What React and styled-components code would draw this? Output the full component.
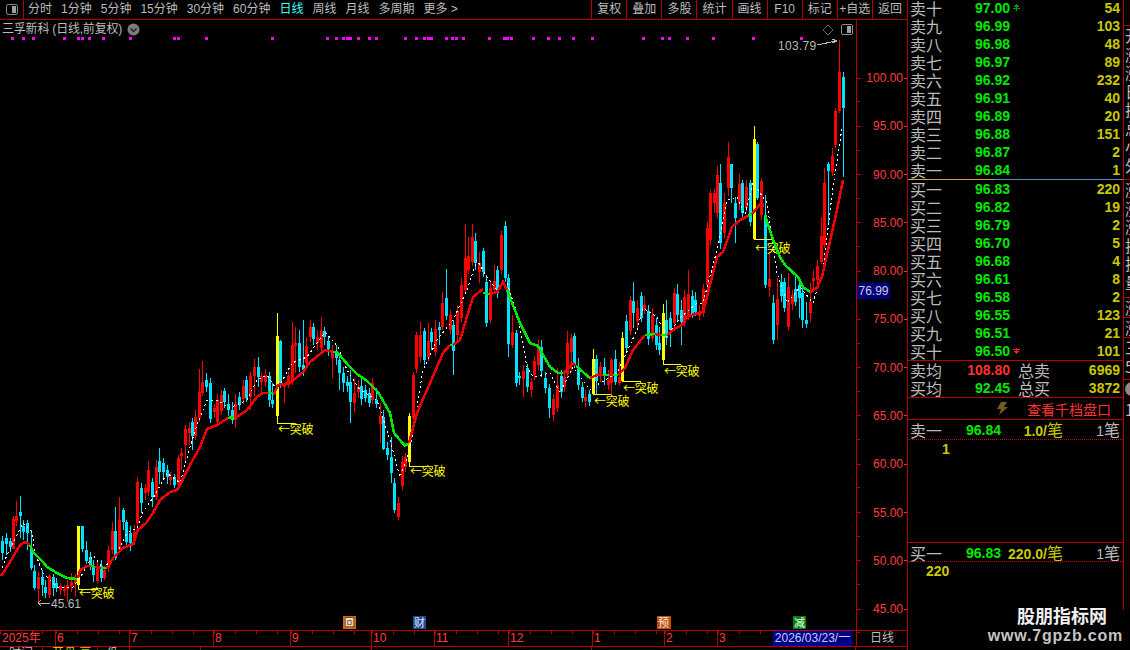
import React from "react";
import styled, { createGlobalStyle } from "styled-components";

const LINE = "#b40000";
const GREY = "#bcbcbc";
const NUM = `"Liberation Sans", "Noto Sans CJK SC", sans-serif`;
const CJK = `"Noto Sans CJK SC", "Liberation Sans", sans-serif`;

const GlobalStyle = createGlobalStyle`
  html, body { margin: 0; padding: 0; background: #000; }
  body { width: 1130px; height: 650px; overflow: hidden; font-family: ${CJK}; }
`;

const Page = styled.div`
  position: relative;
  width: 1130px;
  height: 650px;
  overflow: hidden;
  background: #000;
  display: flex;
`;

const MainCol = styled.div`
  width: 908px;
  flex: none;
  box-sizing: border-box;
  border-right: 1px solid ${LINE};
  display: flex;
  flex-direction: column;
`;

const Toolbar = styled.div`
  height: 20px;
  flex: none;
  box-sizing: border-box;
  border-bottom: 1px solid ${LINE};
  display: flex;
  align-items: stretch;
  font: 12px/19px ${NUM};
  color: ${GREY};
`;

const ToggleCell = styled.div`
  width: 24px;
  flex: none;
  box-sizing: border-box;
  border-right: 1px solid ${LINE};
  display: flex;
  align-items: center;
  justify-content: center;
`;

const PeriodTabs = styled.div`
  display: flex;
  gap: 9px;
  padding-left: 4px;
  flex: 1;
`;

const Tab = styled.span`
  color: ${(p) => (p.$active ? "#40ffff" : GREY)};
  white-space: pre;
`;

const ToolBtn = styled.div`
  width: 35.1px;
  flex: none;
  box-sizing: border-box;
  border-left: 1px solid ${LINE};
  text-align: center;
  white-space: nowrap;
`;

const ChartRow = styled.div`
  height: 610px;
  flex: none;
  display: flex;
`;

const ChartBox = styled.div`
  position: relative;
  width: 856px;
  height: 610px;
  flex: none;
`;

const ChartTitle = styled.div`
  position: absolute;
  left: 2px;
  top: 2px;
  display: flex;
  align-items: center;
  gap: 5px;
  font: 12px/15px ${NUM};
  letter-spacing: -0.2px;
  color: ${GREY};
`;

const ChartSvg = styled.svg`
  display: block;
  shape-rendering: crispEdges;
`;

const AxisCol = styled.div`
  position: relative;
  width: 51px;
  flex: none;
  box-sizing: border-box;
  border-left: 1px solid ${LINE};
  padding-top: 34px;
`;

const AxisRow = styled.div`
  height: 48.27px;
  display: flex;
  align-items: center;
  justify-content: space-between;
  font: 12px/14px ${NUM};
  color: #ff3c3c;
  background: linear-gradient(${LINE}, ${LINE}) left bottom / 3px 1px no-repeat;

  &::before {
    content: "";
    width: 4px;
    height: 1px;
    background: ${LINE};
  }
  &::after {
    content: "";
    width: 3px;
    height: 1px;
    background: #ff3030;
  }
`;

const AxisLabel = styled.span`
  margin-left: auto;
  margin-right: 1px;
`;

const PriceTag = styled.div`
  position: absolute;
  left: 0;
  top: 263px;
  width: 33px;
  height: 16px;
  background: #000080;
  color: #cfcfcf;
  font: 12px/16px ${NUM};
  text-align: center;
`;

const TimeRow = styled.div`
  height: 17px;
  flex: none;
  box-sizing: border-box;
  border-top: 1px solid ${LINE};
  border-bottom: 1px solid ${LINE};
  display: flex;
  font: 12px/15px ${NUM};
  color: #ff3c3c;
`;

const TimeCell = styled.div`
  width: ${(p) => p.$w}px;
  flex: none;
  box-sizing: border-box;
  padding-left: ${(p) => (p.$first ? 2 : 1)}px;
  border-left: ${(p) => (p.$first ? "none" : `1px solid ${LINE}`)};
  background: repeating-linear-gradient(90deg, ${LINE} 0 1px, transparent 1px 21px) left top / 100% 3px no-repeat;
`;

const DateBox = styled.div`
  width: 79px;
  flex: none;
  margin-left: 1px;
  margin-right: 4px;
  box-sizing: border-box;
  background: #000080;
  border: 1px solid #0000b0;
  color: #c8c8ff;
  font-size: 12px;
  line-height: 13px;
  text-align: center;
  white-space: nowrap;
`;

const CycleCell = styled.div`
  flex: 1;
  box-sizing: border-box;
  border-left: 1px solid ${LINE};
  color: ${GREY};
  text-align: center;
`;

const ClipRow = styled.div`
  flex: 1;
  overflow: hidden;
  display: flex;
  font: 12px/12px ${NUM};
  color: ${GREY};
`;

const ClipCell = styled.div`
  width: ${(p) => p.$w}px;
  flex: none;
  box-sizing: border-box;
  padding-left: 9px;
  border-right: 1px solid ${LINE};
  color: ${(p) => p.$color || GREY};
  white-space: nowrap;
  overflow: hidden;
`;

const SidePanel = styled.div`
  width: 216px;
  height: 100%;
  flex: none;
  box-sizing: border-box;
  border-right: 1px solid ${LINE};
  display: flex;
  flex-direction: column;
`;

const BookRows = styled.div`
  height: ${(p) => p.$h}px;
  margin-top: ${(p) => p.$mt || 0}px;
  flex: none;
`;

const BookRow = styled.div`
  height: 18px;
  padding: 0 3px 0 2px;
  display: grid;
  grid-template-columns: 38px 62px 12px 1fr;
  align-items: center;
`;

const Label = styled.span`
  font: 16px/18px ${CJK};
  color: ${GREY};
  white-space: nowrap;
`;

const Num = styled.span`
  font: bold 14px/18px "Liberation Sans", sans-serif;
  color: ${(p) => p.$color || "#00e800"};
  text-align: ${(p) => p.$align || "right"};
`;

const Marker = styled.svg`
  margin-left: 3px;
  display: block;
`;

const MidLine = styled.div`
  height: 1px;
  flex: none;
  background: linear-gradient(90deg, #e0a040 0 86px, #4f8fc4 86px);
`;

const SummaryBox = styled.div`
  flex: none;
  border-top: 1px solid ${LINE};
  border-bottom: 1px solid ${LINE};
`;

const SummaryRow = styled.div`
  height: 18px;
  padding: 0 3px 0 2px;
  display: grid;
  grid-template-columns: 38px 62px 1fr auto;
  align-items: center;
`;

const SumLabel = styled(Label)`
  padding-left: 8px;
`;

const DepthLink = styled.div`
  height: 22px;
  flex: none;
  box-sizing: border-box;
  border-bottom: 1px solid ${LINE};
  display: flex;
  align-items: center;
  padding-left: 88px;
  gap: 19px;
  font: 14px/20px ${CJK};
  color: #ff3030;
`;

const TradeBox = styled.div`
  height: ${(p) => p.$h}px;
  flex: none;
  box-sizing: border-box;
  border-bottom: ${(p) => (p.$end ? "none" : `1px solid ${LINE}`)};
`;

const TradeHead = styled.div`
  height: ${(p) => p.$h}px;
  box-sizing: border-box;
  padding: 0 3px 0 2px;
  border-bottom: 1px dotted #d00000;
  display: grid;
  grid-template-columns: 38px 53px 62px 1fr;
  align-items: center;
`;

const TradeVol = styled.span`
  text-align: right;
  color: #c8c800;
  font: bold 14px/18px "Liberation Sans", sans-serif;
  white-space: nowrap;
`;

const Hand = styled.span`
  font: 16px/18px ${CJK};
  color: ${(p) => p.$color || "inherit"};
  font-weight: 400;
`;

const TradeCount = styled.span`
  text-align: right;
  color: ${GREY};
  font: 14px/18px "Liberation Sans", sans-serif;
`;

const TradeList = styled.div`
  padding-left: ${(p) => p.$pad}px;
  height: 18px;
  display: flex;
  align-items: center;
`;

const Strip = styled.div`
  flex: 1;
  overflow: hidden;
  display: flex;
  flex-direction: column;
  padding-top: 25px;
`;

const StripGroup = styled.div`
  height: ${(p) => p.$h}px;
  flex: none;
  box-sizing: border-box;
  border-top: 1px solid ${LINE};
  padding-left: 1px;
  overflow: hidden;
  font: 16px/18.5px ${CJK};
  color: ${GREY};
  white-space: nowrap;
`;

const StripDot = styled.div`
  width: 14px;
  height: 14px;
  margin: 2px 0 4px;
  border-radius: 50%;
  background: #8a8a8a;
`;

const Watermark = styled.div`
  position: absolute;
  right: 0;
  bottom: 0;
  width: 145px;
  height: 40px;
  background: #000;
  display: flex;
  flex-direction: column;
  align-items: flex-end;
  padding-right: 7px;
  box-sizing: border-box;
`;

const MarkName = styled.div`
  font: bold 18px/22px ${CJK};
  color: #f0f0f0;
  margin: -6px 16px 0 0;
`;

const MarkUrl = styled.div`
  font: bold 16px/19px "Liberation Sans", sans-serif;
  letter-spacing: 0.8px;
  color: #c4c4c4;
`;

// [x, bodyTop, bodyBottom, wickTop, wickBottom, red]
const CANDLES = [
  [2,541,553,536,560,0],[6,538,544,533,555,0],[10,541,547,538,552,0],[13,519,549,516,549,1],[16,516,521,501,526,1],
  [20,512,516,496,538,0],[23,526,532,520,540,0],[27,523,533,520,550,0],[31,548,568,530,570,0],[34,571,588,565,590,0],
  [38,577,589,572,603,1],[42,577,585,570,596,0],[45,587,593,580,598,0],[49,576,595,574,598,1],[53,577,588,574,596,0],
  [56,583,588,578,592,0],[60,586,590,583,595,1],[64,589,591,585,596,1],[67,585,589,580,602,1],[71,582,586,573,592,1],
  [75,578,583,574,597,1],[82,526,549,526,552,0],[86,550,561,541,564,0],[90,557,566,552,570,0],[93,566,575,560,582,0],
  [97,567,581,560,583,1],[101,566,578,560,582,0],[104,570,578,566,580,1],[108,550,568,546,572,1],[112,531,550,522,554,1],
  [115,531,558,507,560,0],[119,520,550,497,552,1],[123,510,522,508,530,0],[126,522,542,520,548,0],[130,533,543,526,551,0],
  [134,532,540,525,545,1],[137,482,523,477,533,1],[141,488,503,483,513,0],[145,488,493,484,500,1],[148,470,492,461,496,1],
  [152,482,497,478,507,0],[156,467,497,460,500,1],[159,461,472,448,484,0],[163,463,472,458,480,0],[167,470,477,465,484,0],
  [170,477,480,472,485,1],[174,477,485,474,488,0],[178,458,484,455,486,1],[181,453,456,448,470,1],[185,429,445,425,462,1],
  [189,428,433,423,445,1],[192,422,436,418,450,0],[195,417,436,410,440,1],[199,392,418,369,422,1],[202,382,393,361,396,1],
  [206,380,387,373,392,0],[210,383,419,378,423,0],[214,408,412,404,418,1],[217,400,422,394,426,1],[221,395,411,390,415,1],
  [224,391,402,388,408,0],[228,404,410,394,416,0],[232,410,420,402,424,0],[235,404,420,394,428,1],[239,397,405,392,410,0],
  [243,386,399,380,404,1],[246,380,398,376,402,0],[250,376,397,372,410,1],[254,367,376,359,396,1],[258,367,377,357,387,0],
  [261,376,382,372,395,1],[265,375,382,369,387,1],[269,376,400,372,407,0],[272,400,404,383,408,0],[280,341,385,340,388,0],
  [284,383,387,383,403,1],[288,376,385,372,388,1],[292,345,382,322,385,1],[295,343,346,327,373,1],[299,343,367,330,372,0],
  [303,365,370,320,376,0],[306,346,363,337,365,1],[310,327,337,320,342,1],[313,327,339,323,345,0],[317,337,343,330,350,1],
  [321,331,348,317,352,1],[324,331,337,327,345,0],[328,341,349,337,356,0],[332,351,358,345,378,1],[336,351,358,345,365,0],
  [339,360,373,356,390,0],[343,373,383,367,392,0],[347,382,386,376,392,0],[350,382,402,370,423,0],[354,393,403,378,412,1],
  [358,387,392,380,398,1],[361,386,399,378,405,0],[365,390,398,385,402,0],[369,393,403,388,407,0],[372,383,400,378,404,1],
  [376,400,404,388,408,0],[380,416,424,403,443,1],[383,417,449,410,450,0],[387,448,455,442,460,0],[391,457,473,437,483,0],
  [394,483,510,478,513,0],[398,503,517,497,520,1],[402,462,486,456,490,1],[405,457,467,453,472,1],[413,375,418,372,420,1],
  [416,335,369,332,373,1],[420,335,357,322,362,1],[424,331,360,328,365,0],[428,341,357,323,361,1],[431,332,342,328,350,0],
  [435,329,352,320,356,1],[439,327,330,322,345,0],[442,303,327,292,330,1],[446,298,316,269,320,0],[450,315,330,310,335,1],
  [453,325,351,320,375,0],[457,311,335,305,340,1],[461,285,318,278,322,1],[465,258,290,224,294,1],[468,256,270,237,274,1],
  [472,237,262,224,266,1],[475,241,263,233,270,0],[479,263,272,252,283,1],[483,251,272,248,277,0],[486,282,323,275,327,0],
  [490,288,320,280,323,1],[494,281,290,265,293,1],[497,270,293,266,298,0],[501,235,270,231,274,1],[505,226,278,221,282,0],
  [508,278,344,274,357,0],[512,332,345,315,348,1],[516,333,383,330,387,0],[519,376,378,372,385,0],[523,371,379,365,397,1],
  [527,368,387,364,392,0],[531,382,390,378,397,1],[534,361,375,356,380,1],[538,348,365,339,370,1],[541,347,371,340,377,0],
  [545,378,388,372,393,0],[549,388,408,384,418,0],[553,399,415,394,421,1],[557,385,408,368,412,1],[561,376,392,370,398,0],
  [564,377,387,372,392,1],[567,343,374,331,378,1],[571,338,352,334,372,1],[574,336,364,333,368,0],[578,367,385,358,390,0],
  [582,387,398,382,402,0],[585,397,401,390,407,1],[589,394,402,390,406,0],[596,359,381,355,395,0],[600,367,375,362,382,1],
  [604,367,375,358,385,0],[608,380,385,370,390,1],[611,360,383,358,397,1],[615,359,382,350,385,0],[619,377,383,362,386,1],
  [626,321,348,315,352,0],[630,300,331,296,335,1],[633,301,313,282,328,0],[637,308,321,300,330,1],[641,296,318,292,322,0],
  [644,305,310,296,314,1],[648,311,339,305,345,0],[652,315,338,308,342,1],[656,325,345,318,350,0],[659,343,350,327,355,0],
  [666,320,338,300,345,0],[670,318,330,312,347,0],[674,293,323,288,330,1],[677,294,315,284,322,0],[681,310,322,300,345,0],
  [684,297,323,290,327,1],[688,294,316,270,320,1],[692,296,314,290,318,0],[695,300,312,292,316,0],[699,312,316,305,320,1],
  [703,289,313,284,317,1],[707,228,285,222,290,1],[710,193,240,190,245,1],[714,193,203,189,213,1],[717,175,213,166,218,1],
  [720,183,243,164,249,0],[724,203,233,193,238,1],[728,157,188,142,196,1],[731,164,188,164,203,0],[735,203,218,197,243,0],
  [739,184,203,174,210,1],[742,183,213,180,218,0],[746,187,208,180,212,1],[750,183,222,180,226,0],[757,144,198,142,200,0],
  [761,181,215,178,220,1],[765,215,285,195,288,0],[769,279,287,252,297,1],[773,303,340,295,344,0],[777,299,325,278,340,1],
  [781,282,296,274,302,0],[784,282,308,278,312,0],[788,287,327,273,330,1],[792,295,304,290,310,1],[795,289,302,275,306,0],
  [799,285,298,280,318,0],[802,293,320,288,328,0],[806,320,324,302,328,0],[810,302,313,283,322,1],[813,278,281,270,292,1],
  [817,266,280,260,286,1],[821,236,262,217,264,1],[824,183,245,168,248,1],[828,164,171,162,224,0],[832,156,172,148,176,1],
  [835,111,145,108,148,1],[839,72,111,40,113,1],[843,77,108,72,177,0],
];

// x, bodyTop, bodyBottom, wickTop, wickBottom of the tall signal bars
const SIGNALS = [
  { x: 78, top: 526, bottom: 585, wickTop: 526, wickBottom: 589, lineEnd: 98, labelY: 598 },
  { x: 277, top: 336, bottom: 416, wickTop: 313, wickBottom: 423, lineEnd: 295, labelY: 434 },
  { x: 409, top: 416, bottom: 462, wickTop: 413, wickBottom: 466, lineEnd: 428, labelY: 476 },
  { x: 593, top: 359, bottom: 394, wickTop: 349, wickBottom: 394, lineEnd: 611, labelY: 406 },
  { x: 622, top: 338, bottom: 381, wickTop: 332, wickBottom: 381, lineEnd: 641, labelY: 393 },
  { x: 663, top: 313, bottom: 360, wickTop: 304, wickBottom: 364, lineEnd: 681, labelY: 376 },
  { x: 754, top: 139, bottom: 239, wickTop: 126, wickBottom: 239, lineEnd: 772, labelY: 253 },
];

const TREND = [
  ["r", "0,575 2,575 10,562 20,545 25,542 30,545"],
  ["g", "30,545 33,552 43,562 47,567 57,573 67,578 77,579"],
  ["r", "78,578 80,570 87,566 91,566"],
  ["g", "91,566 95,567"],
  ["r", "95,567 101,568"],
  ["g", "101,568 107,568"],
  ["r", "107,568 113,558 123,548 133,544 138,530 147,522 153,513 160,500 170,492 177,490 180,485 190,465 200,447 207,429 217,425 228,418"],
  ["g", "228,418 234,417"],
  ["r", "234,417 237,417 247,410 257,397 263,393 270,393"],
  ["g", "268,392 274,394"],
  ["r", "274,394 278,385 290,383 303,372 310,362 325,350 333,352"],
  ["g", "333,352 337,352 348,365 357,374 367,381 378,392 390,413 394,433 405,446 409,443"],
  ["r", "409,443 417,413 430,383 443,353 450,345"],
  ["g", "450,345 453,345"],
  ["r", "453,345 460,340 473,297 483,289"],
  ["g", "483,293 490,294"],
  ["r", "490,294 497,292 503,282 507,290"],
  ["g", "507,290 520,323 530,343 538,346 550,367 558,373 563,373"],
  ["r", "563,373 567,370 573,363 576,366"],
  ["g", "576,366 590,378"],
  ["r", "590,378 597,375 603,375"],
  ["g", "603,375 609,375"],
  ["r", "609,375 613,375"],
  ["g", "613,375 618,375"],
  ["r", "618,375 625,368 633,350 645,335"],
  ["g", "645,335 655,334"],
  ["r", "655,334 661,335"],
  ["g", "661,335 667,335"],
  ["r", "667,335 673,330 682,325 688,316 703,312 708,293 717,257 723,252 732,227 740,220 748,216"],
  ["g", "748,216 752,214"],
  ["r", "752,214 762,202 763,207"],
  ["g", "765,215 772,237 780,257 785,265 798,277 803,287 810,292"],
  ["r", "810,292 817,288 822,277 828,250 837,210 843,180"],
];

const FAST =
  "2,568 7,555 23,523 32,532 35,553 43,573 57,587 73,587 80,578 93,555 103,568 115,557 127,533 137,528 143,512 155,495 167,473 180,483 190,447 197,425 207,400 217,400 230,408 247,400 257,380 267,375 277,390 292,363 307,357 325,332 338,347 347,370 360,390 377,400 390,440 400,477 410,450 423,370 437,340 453,320 467,290 477,260 487,277 497,290 507,283 517,313 527,367 533,377 550,373 560,393 573,367 590,390 600,383 617,373 637,330 643,308 657,317 667,337 680,318 697,303 703,303 717,250 727,200 737,197 745,215 753,183 767,203 777,273 787,303 800,287 813,303 823,270 833,187 842,128";

const DOTS = [12,23,33,64,78,82,89,103,130,174,178,206,272,327,336,343,347,350,358,369,376,405,416,424,428,431,446,452,456,463,489,504,507,511,533,548,559,573,592,643,662,669,687,713,753,801];

const BADGES = [
  { x: 343, w: 13, fill: "#c07018", bg: "#e8e0d0", text: "回", color: "#804000" },
  { x: 413, w: 13, fill: "#1a4a8a", text: "财", color: "#e0e8ff" },
  { x: 657, w: 14, fill: "#c05010", text: "预", color: "#ffe8d8" },
  { x: 793, w: 13, fill: "#008000", text: "减", color: "#f0fff0" },
];

const SELLS = [
  ["卖十", "97.00", "54", "up"], ["卖九", "96.99", "103"], ["卖八", "96.98", "48"], ["卖七", "96.97", "89"], ["卖六", "96.92", "232"],
  ["卖五", "96.91", "40"], ["卖四", "96.89", "20"], ["卖三", "96.88", "151"], ["卖二", "96.87", "2"], ["卖一", "96.84", "1"],
];
const BUYS = [
  ["买一", "96.83", "220"], ["买二", "96.82", "19"], ["买三", "96.79", "2"], ["买四", "96.70", "5"], ["买五", "96.68", "4"],
  ["买六", "96.61", "8"], ["买七", "96.58", "2"], ["买八", "96.55", "123"], ["买九", "96.51", "21"], ["买十", "96.50", "101", "down"],
];

const AXIS = ["100.00","95.00","90.00","85.00","80.00","75.00","70.00","65.00","60.00","55.00","50.00","45.00"];
const MONTHS = [["2025年",55,true],["6",74],["7",84],["8",77],["9",81],["10",63],["11",74],["12",84],["1",72],["2",53],["3",55]];

const PERIODS = ["分时","1分钟","5分钟","15分钟","30分钟","60分钟","日线","周线","月线","多周期","更多 >"];
const TOOLS = ["复权","叠加","多股","统计","画线","F10","标记","+自选","返回"];

const PanelIcon = () => (
  <g>
    <rect x="0.5" y="0.5" width="11" height="10" rx="2" fill="#000" stroke="#8c8c8c" />
    <rect x="6" y="2" width="4" height="7" fill="#a0a0a0" />
  </g>
);

const FlagMark = ({ dir }) => {
  const color = dir === "up" ? "#00a000" : "#f02020";
  const points = dir === "up" ? "3.5,0 6,3 1,3" : "3.5,7 6,4 1,4";
  return (
    <Marker width="8" height="8" viewBox="0 0 8 8" style={{ shapeRendering: "crispEdges" }}>
      <polygon points={points} fill={color} />
      <rect x="0" y={dir === "up" ? 4 : 2} width="7" height="1" fill={color} />
      <rect x="3" y="1" width="1" height="6" fill={color} />
    </Marker>
  );
};

const Candle = ({ c }) => {
  const [x, top, bottom, wickTop, wickBottom, red] = c;
  const fill = red ? "#ff0000" : "#00e0ff";
  return (
    <g fill={fill}>
      <rect x={x} y={wickTop} width="1" height={wickBottom - wickTop} />
      <rect x={x - 1} y={top} width="3" height={Math.max(bottom - top, 2)} />
    </g>
  );
};

const Signal = ({ s }) => (
  <g fill="#ffff00">
    <rect x={s.x} y={s.wickTop} width="1" height={s.wickBottom - s.wickTop} />
    <rect x={s.x - 1} y={s.top} width="3" height={s.bottom - s.top} />
    <rect x={s.x} y={s.wickBottom} width={s.lineEnd - s.x} height="1" />
    <text x={s.x + 1} y={s.labelY} fontSize="12" letterSpacing="-0.3" fontFamily={CJK} style={{ shapeRendering: "auto" }}>
      ←突破
    </text>
  </g>
);

const KLineChart = () => (
  <ChartSvg width="856" height="610" viewBox="0 20 856 610">
    {DOTS.map((x) => (
      <rect key={x} x={x - 1} y="37" width="3" height="3" fill="#ff00ff" />
    ))}
    {CANDLES.map((c) => (
      <Candle key={c[0]} c={c} />
    ))}
    {SIGNALS.map((s) => (
      <Signal key={s.x} s={s} />
    ))}
    <polyline points={FAST} fill="none" stroke="#fff" strokeWidth="1" strokeDasharray="2 3" />
    {TREND.map(([kind, points], i) => (
      <polyline key={i} points={points} fill="none" stroke={kind === "r" ? "#f00000" : "#00e800"} strokeWidth="2.5" />
    ))}

    <rect x="839" y="40" width="1" height="32" fill="#ff0000" />
    <text x="778" y="50" fontSize="12" letterSpacing="0.3" fontFamily={NUM} fill="#b8b8b8">103.79</text>
    <path d="M817 45 L836 41 M832 39 L837 41 L832 43" fill="none" stroke="#b8b8b8" strokeWidth="1" />
    <text x="51" y="608" fontSize="12" fontFamily={NUM} fill="#b8b8b8">45.61</text>
    <path d="M38 603 L50 603 M41 600 L38 603 L41 606" fill="none" stroke="#b8b8b8" strokeWidth="1" />

    <path d="M828 25 L833 30 L828 35 L823 30 Z" fill="none" stroke="#666" strokeWidth="1" shapeRendering="auto" />
    <g transform="translate(841 24)">
      <PanelIcon />
    </g>

    {BADGES.map((b) => (
      <g key={b.x}>
        <rect x={b.x} y="616" width={b.w} height="13" fill={b.fill} />
        {b.bg && <rect x={b.x + 2} y="618" width={b.w - 4} height="9" fill={b.bg} />}
        <text x={b.x + 1} y="627" fontSize="11" fontFamily={CJK} fill={b.color}>{b.text}</text>
      </g>
    ))}
  </ChartSvg>
);

const Book = ({ rows }) =>
  rows.map(([name, price, qty, mark]) => (
    <BookRow key={name}>
      <Label>{name}</Label>
      <Num>{price}</Num>
      {mark ? <FlagMark dir={mark} /> : <span />}
      <Num $color="#c8c800">{qty}</Num>
    </BookRow>
  ));

export default function App() {
  return (
    <Page>
      <GlobalStyle />
      <MainCol>
        <Toolbar>
          <ToggleCell>
            <svg width="12" height="11" viewBox="0 0 12 11">
              <PanelIcon />
            </svg>
          </ToggleCell>
          <PeriodTabs>
            {PERIODS.map((p) => (
              <Tab key={p} $active={p === "日线"}>{p}</Tab>
            ))}
          </PeriodTabs>
          {TOOLS.map((t) => (
            <ToolBtn key={t}>{t}</ToolBtn>
          ))}
        </Toolbar>

        <ChartRow>
          <ChartBox>
            <KLineChart />
            <ChartTitle>
              三孚新科 (日线,前复权)
              <svg width="13" height="13" viewBox="0 0 13 13">
                <circle cx="6.5" cy="6.5" r="6" fill="#7c7c7c" />
                <path d="M3.5 5.5 L6.5 8.5 L9.5 5.5" fill="none" stroke="#222" strokeWidth="1.5" />
              </svg>
            </ChartTitle>
          </ChartBox>
          <AxisCol>
            {AXIS.map((a) => (
              <AxisRow key={a}>
                <AxisLabel>{a}</AxisLabel>
              </AxisRow>
            ))}
            <PriceTag>76.99</PriceTag>
          </AxisCol>
        </ChartRow>

        <TimeRow>
          {MONTHS.map(([m, w, first]) => (
            <TimeCell key={m} $w={w} $first={first}>{m}</TimeCell>
          ))}
          <DateBox>2026/03/23/一</DateBox>
          <CycleCell>日线</CycleCell>
        </TimeRow>

        <ClipRow>
          <ClipCell $w={43}>时间</ClipCell>
          <ClipCell $w={55} $color="#c8c800">开盘 高</ClipCell>
          <ClipCell $w={32}>低</ClipCell>
          <ClipCell $w={71} />
          <ClipCell $w={171} />
          <ClipCell $w={220} />
          <ClipCell $w={264} />
        </ClipRow>
      </MainCol>

      <SidePanel>
        <BookRows $h={180} $mt={-1}>
          <Book rows={SELLS} />
        </BookRows>
        <MidLine />
        <BookRows $h={180}>
          <Book rows={BUYS} />
        </BookRows>
        <SummaryBox>
          <SummaryRow>
            <Label>卖均</Label>
            <Num $color="#ff3030">108.80</Num>
            <SumLabel>总卖</SumLabel>
            <Num $color="#c8c800">6969</Num>
          </SummaryRow>
          <SummaryRow>
            <Label>买均</Label>
            <Num>92.45</Num>
            <SumLabel>总买</SumLabel>
            <Num $color="#c8c800">3872</Num>
          </SummaryRow>
        </SummaryBox>
        <DepthLink>
          <svg width="12" height="13" viewBox="0 0 12 13">
            <polygon points="5,0 11,0 8,5 12,5 3,13 5,7 1,7" fill="#6e5c22" />
          </svg>
          查看千档盘口
        </DepthLink>
        <TradeBox $h={123}>
          <TradeHead $h={20}>
            <Label>卖一</Label>
            <Num>96.84</Num>
            <TradeVol>1.0/<Hand>笔</Hand></TradeVol>
            <TradeCount>1<Hand>笔</Hand></TradeCount>
          </TradeHead>
          <TradeList $pad={34}>
            <Num $color="#c8c800">1</Num>
          </TradeList>
        </TradeBox>
        <TradeBox $h={68} $end>
          <TradeHead $h={19}>
            <Label>买一</Label>
            <Num>96.83</Num>
            <TradeVol>220.0/<Hand>笔</Hand></TradeVol>
            <TradeCount>1<Hand>笔</Hand></TradeCount>
          </TradeHead>
          <TradeList $pad={18}>
            <Num $color="#c8c800">220</Num>
          </TradeList>
        </TradeBox>
      </SidePanel>

      <Strip>
        <StripGroup $h={154}>
          开<br />涨<br />涨<br />日<br />换<br />总<br />小<br />外
        </StripGroup>
        <StripGroup $h={118}>
          涨<br />涨<br />涨<br />换<br />换<br />量
        </StripGroup>
        <StripGroup $h={20}>涨</StripGroup>
        <StripGroup $h={20}>涨</StripGroup>
        <StripGroup $h={42}>
          三<br />5
        </StripGroup>
        <StripGroup $h={60}>
          <StripDot />1
        </StripGroup>
      </Strip>

      <Watermark>
        <MarkName>股朋指标网</MarkName>
        <MarkUrl>www.7gpzb.com</MarkUrl>
      </Watermark>
    </Page>
  );
}
